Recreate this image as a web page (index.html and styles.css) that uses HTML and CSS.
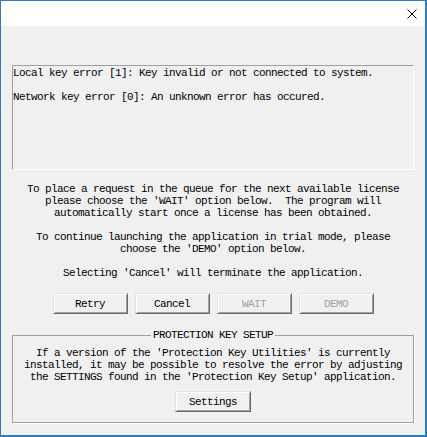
FILE: index.html
```html
<!DOCTYPE html>
<html lang="en">
<head>
    <meta charset="UTF-8">
    <title>Protection Key</title>
    <link rel="stylesheet" href="styles.css">
</head>
<body>
    <div class="window">
        <div class="titlebar">
            <svg class="close-icon" width="10" height="10" viewBox="0 0 10 10">
                <path d="M0.5 0.5 L9.5 9.5 M9.5 0.5 L0.5 9.5" stroke="#000" stroke-width="1" fill="none"/>
            </svg>
        </div>

        <div class="content">
            <!-- Journal des erreurs (lecture seule) -->
            <div class="log">
                <div class="log-text">Local key error [1]: Key invalid or not connected to system.<br><br>Network key error [0]: An unknown error has occured.</div>
            </div>

            <div class="info">
                <p>To place a request in the queue for the next available license<br>please choose the 'WAIT' option below.  The program will<br>automatically start once a license has been obtained.</p>
                <p>To continue launching the application in trial mode, please<br>choose the 'DEMO' option below.</p>
                <p>Selecting 'Cancel' will terminate the application.</p>
            </div>

            <div class="button-row">
                <button type="button" class="btn" id="retryBtn">Retry</button>
                <button type="button" class="btn" id="cancelBtn">Cancel</button>
                <button type="button" class="btn" disabled>WAIT</button>
                <button type="button" class="btn" disabled>DEMO</button>
            </div>

            <fieldset class="group">
                <legend>PROTECTION KEY SETUP</legend>
                <p>If a version of the 'Protection Key Utilities' is currently<br>installed, it may be possible to resolve the error by adjusting<br>the SETTINGS found in the 'Protection Key Setup' application.</p>
                <div class="group-actions">
                    <button type="button" class="btn btn-settings">Settings</button>
                </div>
            </fieldset>
        </div>
    </div>
</body>
</html>
```

FILE: styles.css
```css
body {
    margin: 0;
    font-family: "Liberation Mono", monospace;
    font-size: 11px;
    letter-spacing: -0.6px;
    color: #000;
}
.window {
    width: 427px;
    height: 437px;
    box-sizing: border-box;
    border: 1px solid #2f7dc0;
    border-right-width: 2px;
    border-bottom-width: 2px;
    background-color: #f0f0f0;
}
.titlebar {
    height: 25px;
    background-color: #fff;
    display: flex;
    justify-content: flex-end;
    align-items: center;
    padding-right: 8px;
}
.content {
    padding: 0 11px;
}
.log {
    margin-top: 39px;
    height: 103px;
    border: 1px solid;
    border-color: #a0a0a0 #fff #fff #a0a0a0;
    overflow: hidden;
    line-height: 12px;
}
.log-text {
    padding-top: 1px;
    white-space: pre;
}
.info {
    margin-top: 13px;
    text-align: center;
    line-height: 12px;
}
.info p {
    margin: 0 0 12px;
    white-space: pre;
}
.info p:last-child {
    margin-bottom: 0;
}
.button-row {
    margin-top: 14px;
    display: flex;
    justify-content: center;
    gap: 7px;
}
.btn {
    width: 75px;
    height: 21px;
    padding: 0;
    font-family: "Liberation Mono", monospace;
    font-size: 11px;
    letter-spacing: -0.6px;
    line-height: 12px;
    color: #000;
    background-color: #f0f0f0;
    border: 1px solid;
    border-color: #e3e3e3 #696969 #696969 #e3e3e3;
    box-shadow: inset 1px 1px 0 #fff, inset -1px -1px 0 #a0a0a0;
}
.btn:disabled {
    color: #a0a0a0;
}
.group {
    margin: 15px 0 0;
    padding: 6px 0 10px;
    min-width: 0;
    border: 1px solid #a0a0a0;
    box-shadow: 1px 1px 0 #fff;
}
.group legend {
    margin: 0 auto;
    padding: 0 2px;
    line-height: 12px;
}
.group p {
    margin: 0;
    text-align: center;
    line-height: 12px;
    white-space: pre;
}
.group-actions {
    margin-top: 8px;
    display: flex;
    justify-content: center;
}
.btn-settings {
    width: 76px;
}
```
